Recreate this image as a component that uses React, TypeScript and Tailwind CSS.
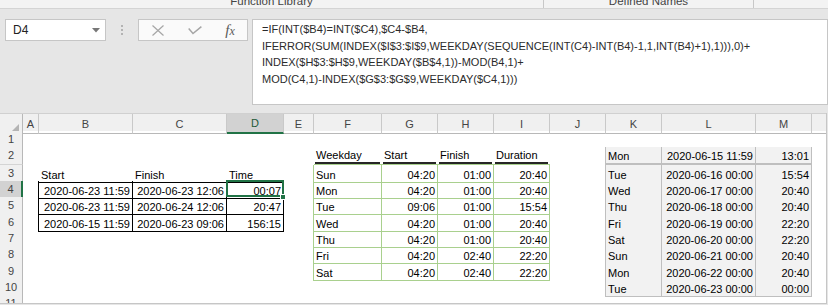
import type { ReactNode } from "react";

type Cell = { t?: string; right?: boolean; cls?: string; head?: boolean; sel?: boolean };
type Row = Record<string, Cell>;

const COLS = ["A", "B", "C", "D", "E", "F", "G", "H", "I", "J", "K", "L", "M", "N"];
const GRID = "grid grid-cols-[23px_16px_94px_94px_57px_30px_68px_56px_56px_56px_56px_56px_94px_56px_14px]";
const ROW_H = ["h-[16px]", "h-[18px]", "h-[16px]", "h-[16px]", "h-[17px]", "h-[16px]", "h-[16px]", "h-[17px]", "h-[16px]", "h-[16px]", "h-[16px]"];

const BLACK = "border-black";
const GREEN = "border-[#a9d08e]";
const GRAY = "border-[#bfbfbf]";

const FORMULA = [
  "=IF(INT($B4)=INT($C4),$C4-$B4,",
  "IFERROR(SUM(INDEX($I$3:$I$9,WEEKDAY(SEQUENCE(INT(C4)-INT(B4)-1,1,INT(B4)+1),1))),0)+",
  "INDEX($H$3:$H$9,WEEKDAY($B$4,1))-MOD(B4,1)+",
  "MOD(C4,1)-INDEX($G$3:$G$9,WEEKDAY($C4,1)))",
];

const rows: Row[] = Array.from({ length: 11 }, () => ({}));

// B3:D6 — start / finish / time
const times = [
  ["2020-06-23 11:59", "2020-06-23 12:06", "00:07"],
  ["2020-06-23 11:59", "2020-06-24 12:06", "20:47"],
  ["2020-06-15 11:59", "2020-06-23 09:06", "156:15"],
];
["Start", "Finish", "Time"].forEach((t, i) => (rows[2]["BCD"[i]] = { t, cls: `border-b ${BLACK}` }));
times.forEach((r, i) => {
  rows[3 + i].A = { cls: `border-r ${BLACK}` };
  r.forEach((t, j) => (rows[3 + i]["BCD"[j]] = { t, right: true, cls: `border-r border-b ${BLACK}` }));
});
rows[3].D.sel = true;

// F2:I9 — weekday schedule
const week = [
  ["Sun", "04:20", "01:00", "20:40"],
  ["Mon", "04:20", "01:00", "20:40"],
  ["Tue", "09:06", "01:00", "15:54"],
  ["Wed", "04:20", "01:00", "20:40"],
  ["Thu", "04:20", "01:00", "20:40"],
  ["Fri", "04:20", "02:40", "22:20"],
  ["Sat", "04:20", "02:40", "22:20"],
];
["Weekday", "Start", "Finish", "Duration"].forEach(
  (t, i) => (rows[1]["FGHI"[i]] = { t, head: true, cls: `border-b ${GREEN}` })
);
week.forEach((r, i) => {
  rows[2 + i].E = { cls: `border-r ${GREEN}` };
  r.forEach((t, j) => (rows[2 + i]["FGHI"[j]] = { t, right: j > 0, cls: `border-r border-b ${GREEN}` }));
});

// K2:M10 — day by day
const days = [
  ["Mon", "2020-06-15 11:59", "13:01"],
  ["Tue", "2020-06-16 00:00", "15:54"],
  ["Wed", "2020-06-17 00:00", "20:40"],
  ["Thu", "2020-06-18 00:00", "20:40"],
  ["Fri", "2020-06-19 00:00", "22:20"],
  ["Sat", "2020-06-20 00:00", "22:20"],
  ["Sun", "2020-06-21 00:00", "20:40"],
  ["Mon", "2020-06-22 00:00", "20:40"],
  ["Tue", "2020-06-23 00:00", "00:00"],
];
"KLM".split("").forEach((c) => (rows[0][c] = { cls: `border-b ${GRAY}` }));
days.forEach((r, i) => {
  rows[1 + i].J = { cls: `border-r ${GRAY}` };
  r.forEach(
    (t, j) =>
      (rows[1 + i]["KLM"[j]] = {
        t,
        right: j > 0,
        cls: `bg-[#f2f2f2] border-r ${i === 0 ? "border-b-2" : "border-b"} ${GRAY}`,
      })
  );
});

function SheetCell({ c }: { c?: Cell }) {
  if (!c) return <div />;
  let body: ReactNode = c.t;
  if (c.head) {
    body = (
      <div className="ml-[1px] mr-[2px] flex-1 h-full flex items-end pl-[1px] border-b-2 border-[#262626]">{c.t}</div>
    );
  }
  return (
    <div
      className={`relative flex items-end whitespace-nowrap leading-[14px] ${
        c.head ? "" : c.right ? "justify-end pr-[2px]" : "pl-[2px]"
      } ${c.cls ?? ""}`}
    >
      {body}
      {c.sel && (
        <div className="absolute -left-[1px] -top-[1px] w-[58px] h-[17px] border-2 border-[#217346] z-10 pointer-events-none">
          <div className="absolute left-[52px] top-[12px] w-[6px] h-[6px] bg-[#217346] border border-white" />
        </div>
      )}
    </div>
  );
}

export default function App() {
  return (
    <div className="w-[828px] h-[305px] overflow-hidden bg-[#e6e6e6] font-['Liberation_Sans',Arial,sans-serif] text-black">
      {/* ribbon group labels, cut off at the top */}
      <div className="flex h-[9px] bg-[#f3f3f3] border-b border-[#d4d4d4] overflow-hidden text-[11.5px] leading-[12px] text-[#444]">
        <div className="w-[544px] border-r border-[#c8c8c8] flex items-end justify-center">
          <span className="mb-[1px]">Function Library</span>
        </div>
        <div className="w-[210px] border-r border-[#c8c8c8] flex items-end justify-center">
          <span className="mb-[1px]">Defined Names</span>
        </div>
        <div className="flex-1" />
      </div>

      {/* name box + formula bar */}
      <div className="flex items-start pt-[10px] pl-[5px]">
        <div className="w-[101px] h-[22px] bg-white border border-[#c6c6c6] flex items-center justify-between pl-[7px] pr-[5px] text-[12px] text-[#222]">
          <span>D4</span>
          <svg width="8" height="5" viewBox="0 0 8 5">
            <polygon points="0,0 8,0 4,4.5" fill="#777" />
          </svg>
        </div>
        <div className="w-[32px] h-[22px] flex flex-col items-center justify-center gap-[2px]">
          <span className="w-[2px] h-[2px] bg-[#b3b3b3]" />
          <span className="w-[2px] h-[2px] bg-[#b3b3b3]" />
          <span className="w-[2px] h-[2px] bg-[#b3b3b3]" />
        </div>
        <div className="w-[110px] h-[22px] bg-[#fafafa] border border-[#c6c6c6] flex items-center">
          <div className="w-[38px] flex justify-center">
            <svg width="12" height="11" viewBox="0 0 12 11">
              <path d="M0.5 0.5 L11.5 10.5 M11.5 0.5 L0.5 10.5" stroke="#a6a6a6" strokeWidth="1.2" fill="none" />
            </svg>
          </div>
          <div className="w-[36px] flex justify-center">
            <svg width="14" height="9" viewBox="0 0 14 9">
              <polyline points="0.7,2.5 5,7.5 13.4,0.7" stroke="#a6a6a6" strokeWidth="1.5" fill="none" />
            </svg>
          </div>
          <div className="w-[34px] flex justify-center">
            <span className="italic font-['Liberation_Serif',serif] text-[15px] leading-none text-[#595959]">
              f<span className="text-[12px]">x</span>
            </span>
          </div>
        </div>
        <div className="ml-[4px] flex-1 h-[86px] bg-white border border-[#c6c6c6] pl-[9px] pt-[1px] text-[11px] leading-[16.7px] text-[#2b2b2b]">
          {FORMULA.map((l) => (
            <div key={l} className="whitespace-nowrap">{l}</div>
          ))}
        </div>
      </div>

      {/* sheet */}
      <div className="mt-[8px] w-[827px] border-r border-[#c6c6c6] bg-white">
        <div className={`${GRID} h-[18px] border-t border-[#d0d0d0] bg-[#f0f0f0] text-[11px] text-[#444]`}>
          <div className="flex items-end justify-end pr-[3px] pb-[2px] border-r border-b border-[#b8b8b8]">
            <svg width="7" height="7" viewBox="0 0 7 7">
              <polygon points="7,0 7,7 0,7" fill="#b4b4b4" />
            </svg>
          </div>
          {COLS.map((c, i) => (
            <div
              key={c}
              className={`flex items-center justify-center pt-[1px] ${i < 13 ? "border-r border-[#c9c9c9]" : ""} ${
                i === 3 ? "bg-[#d2d2d2] border-b-2 border-b-[#217346] text-[#215a36]" : "border-b border-b-[#b8b8b8]"
              }`}
            >
              {i < 13 ? c : ""}
            </div>
          ))}
        </div>

        <div className="h-[173px] overflow-hidden border-b border-[#c6c6c6] text-[11px]">
          {rows.map((row, r) => (
            <div key={r} className={`${GRID} ${ROW_H[r]}`}>
              <div
                className={`flex items-center justify-center border-b border-[#d4d4d4] text-[#444] ${
                  r === 3 ? "bg-[#d2d2d2] border-r-2 border-r-[#217346]" : "bg-[#f0f0f0] border-r border-r-[#b8b8b8]"
                }`}
              >
                {r + 1}
              </div>
              {COLS.map((c) => (
                <SheetCell key={c} c={row[c]} />
              ))}
            </div>
          ))}
        </div>
      </div>
    </div>
  );
}
